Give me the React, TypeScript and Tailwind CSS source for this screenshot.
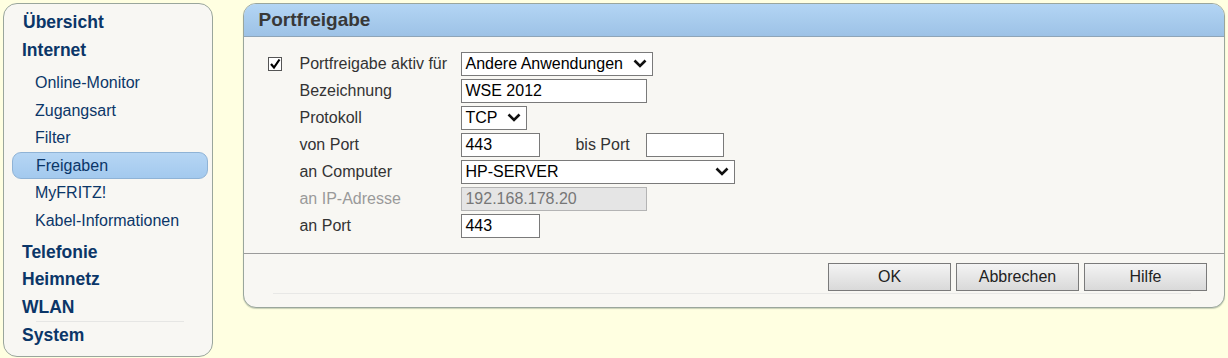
import React from "react"

const font = "font-['Liberation_Sans',Arial,sans-serif]"

function Chevron() {
  return (
    <svg width="14" height="9" viewBox="0 0 14 9" className="shrink-0">
      <polyline points="1.5,1.5 7,7 12.5,1.5" fill="none" stroke="#111" strokeWidth="2.6" />
    </svg>
  )
}

function Select({ value, width }: { value: string; width: string }) {
  return (
    <div
      className={`flex h-[24px] items-center justify-between border border-[#7a7a7a] bg-white pl-[3px] pr-[5px] text-[16px] text-black ${width}`}
    >
      <span>{value}</span>
      <Chevron />
    </div>
  )
}

function Input({ value, width, disabled }: { value?: string; width: string; disabled?: boolean }) {
  return (
    <div
      className={`flex h-[24px] items-center border pl-[3px] text-[16px] ${width} ${
        disabled ? "border-[#b4b4b4] bg-[#e5e5e5] text-[#777]" : "border-[#7a7a7a] bg-white text-black"
      }`}
    >
      {value}
    </div>
  )
}

function Row({ label, children, check, muted }: { label: string; children: React.ReactNode; check?: boolean; muted?: boolean }) {
  return (
    <div className="flex h-[27px] items-center">
      <div className="w-[31px]">
        {check && (
          <svg width="14" height="14" viewBox="0 0 14 14">
            <rect x="0.5" y="0.5" width="13" height="13" fill="white" stroke="#555" />
            <polyline points="3,7 6,10.5 11.5,2.5" fill="none" stroke="#000" strokeWidth="2.2" />
          </svg>
        )}
      </div>
      <div className={`w-[162px] text-[16px] ${muted ? "text-[#9a9a9a]" : "text-[#333]"}`}>{label}</div>
      {children}
    </div>
  )
}

function Button({ children }: { children: React.ReactNode }) {
  return (
    <div className="flex h-[28px] w-[123px] items-center justify-center border border-[#7a7a7a] bg-gradient-to-b from-[#f4f4f4] to-[#d9d9d9] text-[16px] text-[#222]">
      {children}
    </div>
  )
}

const subItems = ["Online-Monitor", "Zugangsart", "Filter", "Freigaben", "MyFRITZ!", "Kabel-Informationen"]

export default function App() {
  return (
    <div className={`flex h-[358px] w-[1228px] items-start gap-[30px] bg-[#ffffe1] p-[3px] ${font}`}>
      <nav className="flex h-[354px] w-[211px] flex-col rounded-[14px] border border-[#9aa69c] bg-[#f8f7f3] pt-[4px] text-[#0b3668]">
        <div className="flex h-[28px] items-center pl-[19px] text-[17.5px] font-bold">Übersicht</div>
        <div className="flex h-[28px] items-center pl-[18px] text-[17.5px] font-bold">Internet</div>
        <div className="flex flex-col pt-[5px]">
          {subItems.map((item, i) =>
            item === "Freigaben" ? (
              <div
                key={item}
                className="ml-[8px] mr-[4px] flex h-[27px] items-center rounded-[9px] border border-[#8fb3d6] bg-gradient-to-b from-[#b6d6f4] to-[#a3c9ee] pl-[23px] text-[16px]"
              >
                {item}
              </div>
            ) : (
              <div key={item} className={`flex ${i % 2 === 0 ? "h-[28px]" : "h-[27px]"} items-center pl-[31px] text-[16px]`}>
                {item}
              </div>
            )
          )}
        </div>
        <div className="flex flex-col pt-[4px] text-[17.5px] font-bold">
          <div className="flex h-[28px] items-center pl-[18px]">Telefonie</div>
          <div className="flex h-[27px] items-center pl-[18px]">Heimnetz</div>
          <div className="flex h-[28px] items-center pl-[18px]">WLAN</div>
          <div className="ml-[32px] w-[148px] border-t border-[#e6e6e4]" />
          <div className="flex h-[27px] items-center pl-[18px]">System</div>
        </div>
      </nav>

      <section className="flex h-[305px] w-[984px] flex-col overflow-hidden rounded-[13px] border border-[#9aa69c] bg-[#f8f7f3] shadow-[0_1px_1px_rgba(120,140,120,0.4)]">
        <header className="flex h-[33px] items-center border-b border-[#8ea5b8] bg-gradient-to-b from-[#b3d5f4] to-[#9dc2e6] pl-[14px] text-[19px] font-bold text-[#383838]">
          Portfreigabe
        </header>
        <div className="flex flex-col pl-[24px] pt-[13px] pb-[14px]">
          <Row label="Portfreigabe aktiv für" check>
            <Select value="Andere Anwendungen" width="w-[192px]" />
          </Row>
          <Row label="Bezeichnung">
            <Input value="WSE 2012" width="w-[186px]" />
          </Row>
          <Row label="Protokoll">
            <Select value="TCP" width="w-[66px]" />
          </Row>
          <Row label="von Port">
            <Input value="443" width="w-[79px]" />
            <span className="ml-[35px] w-[71px] text-[16px] text-[#333]">bis Port</span>
            <Input width="w-[78px]" />
          </Row>
          <Row label="an Computer">
            <Select value="HP-SERVER" width="w-[274px]" />
          </Row>
          <Row label="an IP-Adresse" muted>
            <Input value="192.168.178.20" width="w-[186px]" disabled />
          </Row>
          <Row label="an Port">
            <Input value="443" width="w-[79px]" />
          </Row>
        </div>
        <div className="flex flex-1 flex-col border-t border-[#9b9b9b]">
          <div className="flex justify-end gap-[5px] pr-[17px] pt-[9px]">
            <Button>OK</Button>
            <Button>Abbrechen</Button>
            <Button>Hilfe</Button>
          </div>
          <div className="ml-[29px] mr-[33px] mt-[2px] border-t border-[#e8e8e6]" />
        </div>
      </section>
    </div>
  )
}
